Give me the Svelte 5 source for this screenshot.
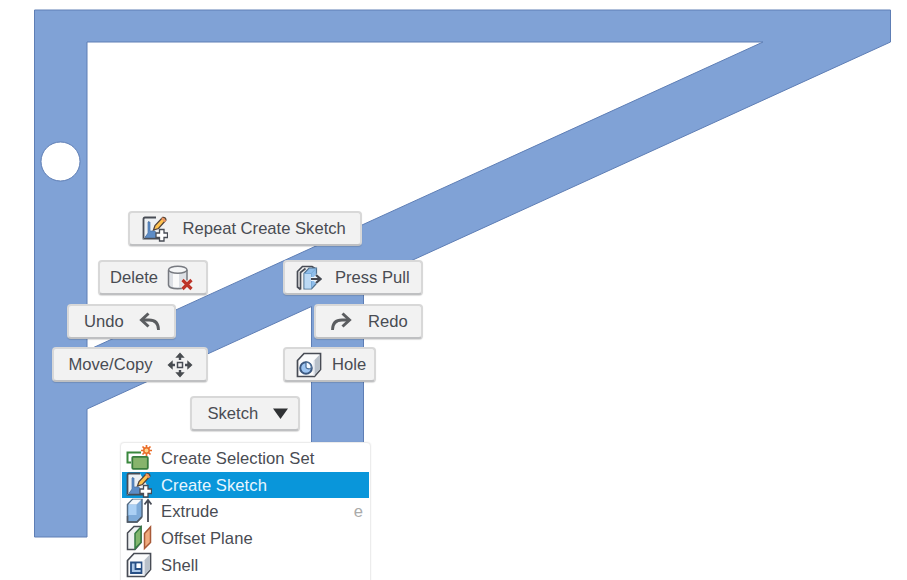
<script>
  const commands = [
    { label: 'Repeat Create Sketch', icon: 'sketch', x: 128, y: 211, w: 234, tx: 52.5, ix: 12 },
    { label: 'Delete', icon: 'delete', x: 98, y: 260, w: 110, tx: 10, ix: 67 },
    { label: 'Press Pull', icon: 'press', x: 283, y: 260, w: 140, tx: 50, ix: 11 },
    { label: 'Undo', icon: 'undo', x: 67, y: 304, w: 109, tx: 15, ix: 68 },
    { label: 'Redo', icon: 'redo', x: 314, y: 304, w: 109, tx: 52, ix: 12 },
    { label: 'Move/Copy', icon: 'move', x: 52, y: 347, w: 156, tx: 14.5, ix: 113 },
    { label: 'Hole', icon: 'hole', x: 283, y: 347, w: 93, tx: 47, ix: 11 },
    { label: 'Sketch', icon: 'down', x: 190, y: 396, w: 110, tx: 15.5, ix: 76 }
  ];
  const items = [
    { label: 'Create Selection Set', icon: 'set' },
    { label: 'Create Sketch', icon: 'sketch', selected: true },
    { label: 'Extrude', icon: 'extrude', key: 'e' },
    { label: 'Offset Plane', icon: 'plane' },
    { label: 'Shell', icon: 'shell' }
  ];
</script>

{#snippet glyph(name)}
  <svg class="icon" viewBox="0 0 26 26" fill="none" stroke="#484c55" stroke-width="1.5">
    {#if name === 'sketch'}
      <path d="M14 1.5H3Q1.5 1.5 1.5 3V22.5H21V13" fill="#edf0f3" stroke-width="1.8" />
      <path d="M1.5 22.5 6.5 17.5M6.5 5V17.5H18" stroke="#9aa3ae" stroke-width="1" />
      <path d="M6 6V17L3 21.5H16L13 15H8V6Z" fill="#5d8cc6" stroke="#4773a9" stroke-width=".7" />
      <path d="M11.5 14 13 9.5 20.5 1.5Q23.5 1 24 4L16.5 12.5Z" fill="#ffc24e" stroke="#54443b" stroke-width="1.3" />
      <path d="m20 2 3.5 3.5" stroke="#ee9365" stroke-width="2" />
      <path d="M17.5 13.5h4.5v3.5h3.5v4.5H22V25h-4.5v-3.5H14V17h3.5Z" fill="#fff" stroke-width="1.3" />
    {:else if name === 'delete'}
      <path d="M1.5 5v15c1 5 17 5 18.5 0V5" fill="#dde0e5" stroke="#777a80" />
      <path d="M6 8v14h6V8Z" fill="#fafafa" stroke="none" />
      <ellipse cx="10.8" cy="4.8" rx="9.2" ry="3.5" fill="#f5f6f7" stroke="#777a80" />
      <path d="m15.5 15 9 9m0-9-9 9" stroke="#f4f4f4" stroke-width="5" />
      <path d="m15.5 15 9 9m0-9-9 9" stroke="#bd3529" stroke-width="3.2" />
    {:else if name === 'press'}
      <path d="M4.5 24.5 1.5 22V6.5l5-5H16l3 2M4.5 24.5V7.5l5-4" stroke-width="1.7" />
      <path d="M8 8.5 13 3h7.5v15.5l-5 5.5H8Z" fill="#8fbeeb" stroke="#51718e" stroke-width="1.2" />
      <path d="M8.5 8.5h6.8v15H8.5Z" fill="#bcdaf5" stroke="none" />
      <path d="M8.5 8.5h6.8L20 3.5M15.5 8.5V23" stroke="#78aad8" stroke-width="1" />
      <path d="M15 14h8m-3.5-4 4 4-4 4" stroke="#e9f2fa" stroke-width="4" />
      <path d="M15 14h9m-4-4 4.5 4-4.5 4" stroke="#454850" stroke-width="2.2" />
    {:else if name === 'undo' || name === 'redo'}
      <g transform={name === 'redo' ? 'matrix(-1 0 0 1 26 0)' : undefined} stroke="#5b5d60">
        <path d="M5 11h7c6.500 0 9.500 3.500 9.500 10" stroke-width="2.800" />
        <path d="m11.500 4.500-7 6.500 7 6.500" stroke-width="3" />
      </g>
    {:else if name === 'move'}
      <rect x="10.5" y="10.5" width="5" height="5" />
      <path d="M13 8V2M13 18v6M8 13H2M18 13h6" stroke-width="2.4" />
      <path d="M8.300 5.700 13 .5l4.700 5.200ZM8.300 20.300l4.700 5.200 4.700-5.200ZM5.700 8.300.5 13l5.200 4.700ZM20.300 8.300l5.200 4.700-5.200 4.700Z" fill="#484c50" stroke="none" />
    {:else if name === 'hole' || name === 'shell'}
      <path d="M1.5 8.5 8 1.5h16.5v16L18.5 24.5h-17Z" fill="#fafbfc" stroke-width="1.7" />
      <path d="M18 8.5 23.800 2.500v15L18 23.700Z" fill="#b8c0c9" stroke="none" />
      <path d="M18 8.5v15" stroke="#e4e9ef" stroke-width="1.5" />
      {#if name === 'hole'}
        <circle cx="10" cy="16" r="5.8" fill="#9dc5f2" stroke="#3c587f" stroke-width="2" />
        <path d="M10 10v5c0 2 3 2 5 1.5 1-3-1-6-5-6.5Z" fill="#f5faff" stroke="#496c96" stroke-width="1.2" />
      {:else}
        <path d="M5 10.5h10.5V21H5Z" fill="#adc9e9" stroke="#285085" stroke-width="1.8" />
        <path d="M9.500 11v6h6" stroke="#285085" stroke-width="1.800" />
        <path d="M10.700 11.500h4v4.500h-4Z" fill="#fff" stroke="none" />
      {/if}
    {:else if name === 'down'}
      <path d="M5 7.5h15L12.5 18Z" fill="#303234" stroke="none" />
    {:else if name === 'set'}
      <path d="M5 17.500H1.500V7.500H15" stroke="#39883c" stroke-width="2" />
      <rect x="6.3" y="11.8" width="15.500" height="12" rx="1" fill="#87b46c" stroke="#397d3d" stroke-width="1.8" />
      <path d="M20.500 0v11M15 5.500h11M16.500 1.500l8 8M24.500 1.500l-8 8" stroke="#ea6c28" stroke-width="1.700" />
      <circle cx="20.500" cy="5.500" r="2.700" fill="#ffd58b" stroke="#ea6c28" />
    {:else if name === 'extrude'}
      <path d="m1.5 6.5 5-5H16v17L11 24H1.5Z" fill="#7eabd9" stroke="#546b82" />
      <path d="M2.5 6.5h8l5-5H7Z" fill="#f4f8fc" stroke="none" />
      <path d="M2.5 7h8v10h-8Z" fill="#abd0f4" stroke="none" />
      <path d="M1.5 18v6H11l5-5" stroke="#505862" />
      <path d="M22 24V3m-3.5 3.5L22 2l3.5 4.5" stroke-width="1.8" />
    {:else if name === 'plane'}
      <path d="M1.5 8 8 1.5h7v16L9 24.5H1.5Z" fill="#eef1f2" />
      <path d="M9 8.5 15 2v15.5L9 23.5Z" fill="#80b66d" stroke="#347b43" />
      <path d="m18.5 8.5 6-6.5v15.5l-6 6Z" fill="#f0ab7e" stroke="#a85a38" />
    {/if}
  </svg>
{/snippet}

<main>
  <svg class="model" viewBox="0 0 907 580" aria-hidden="true">
    <path
      fill-rule="evenodd"
      d="M34.5 10H890.5V42L363.5 282.5V443H311.5V306.5L87 409V537H34.5ZM87 42V350.5L763 42ZM80 161.5a19.5 19.5 0 1 0-39 0a19.5 19.5 0 1 0 39 0Z"
    />
  </svg>

  {#each commands as c}
    <button style="left:{c.x}px;top:{c.y}px;width:{c.w}px">
      <span class="label" style="left:{c.tx}px">{c.label}</span>
      <span class="symbol" style="left:{c.ix}px">{@render glyph(c.icon)}</span>
    </button>
  {/each}

  <div class="menu">
    {#each items as item}
      <div class="row" class:selected={item.selected}>
        {@render glyph(item.icon)}
        <span class="name">{item.label}</span>
        {#if item.key}<span class="key">{item.key}</span>{/if}
      </div>
    {/each}
  </div>
</main>

<style>
  :global(body) { background: #fff; }
  main {
    position: relative;
    width: 907px;
    height: 580px;
    overflow: hidden;
    background: #fff;
    font: 16.6px/20px "Liberation Sans", Arial, sans-serif;
    color: #494c53;
  }
  .model { position: absolute; inset: 0; width: 907px; height: 580px; }
  .model path { fill: #80a2d6; stroke: #5e7eb5; stroke-width: 1; }
  button {
    position: absolute;
    box-sizing: border-box;
    height: 35px;
    padding: 0;
    border: 2px solid #d8d8d8;
    border-bottom-color: #bfc0c2;
    border-radius: 4px;
    background: #f2f2f2;
    box-shadow: 0 1px 1px #0002;
    font: inherit;
    color: inherit;
  }
  .label { position: absolute; top: 6px; white-space: nowrap; }
  .symbol { position: absolute; top: 3px; height: 26px; }
  .icon { display: block; width: 26px; height: 26px; flex: none; }
  .menu {
    position: absolute;
    left: 120px;
    top: 442px;
    box-sizing: border-box;
    width: 251px;
    height: 150px;
    padding: 2px 1px;
    border: 1px solid #ececec;
    border-radius: 4px;
    background: #fff;
    box-shadow: 0 0 2px #0001;
  }
  .row {
    display: flex;
    align-items: center;
    box-sizing: border-box;
    height: 26.6px;
    padding: 0 6px 0 4px;
  }
  .name { margin-left: 9px; padding-top: 2px; letter-spacing: 0.06px; white-space: nowrap; }
  .key { margin-left: auto; padding-top: 2px; color: #aaa; }
  .selected { background: #0996da; color: #e8f6ff; }
</style>
